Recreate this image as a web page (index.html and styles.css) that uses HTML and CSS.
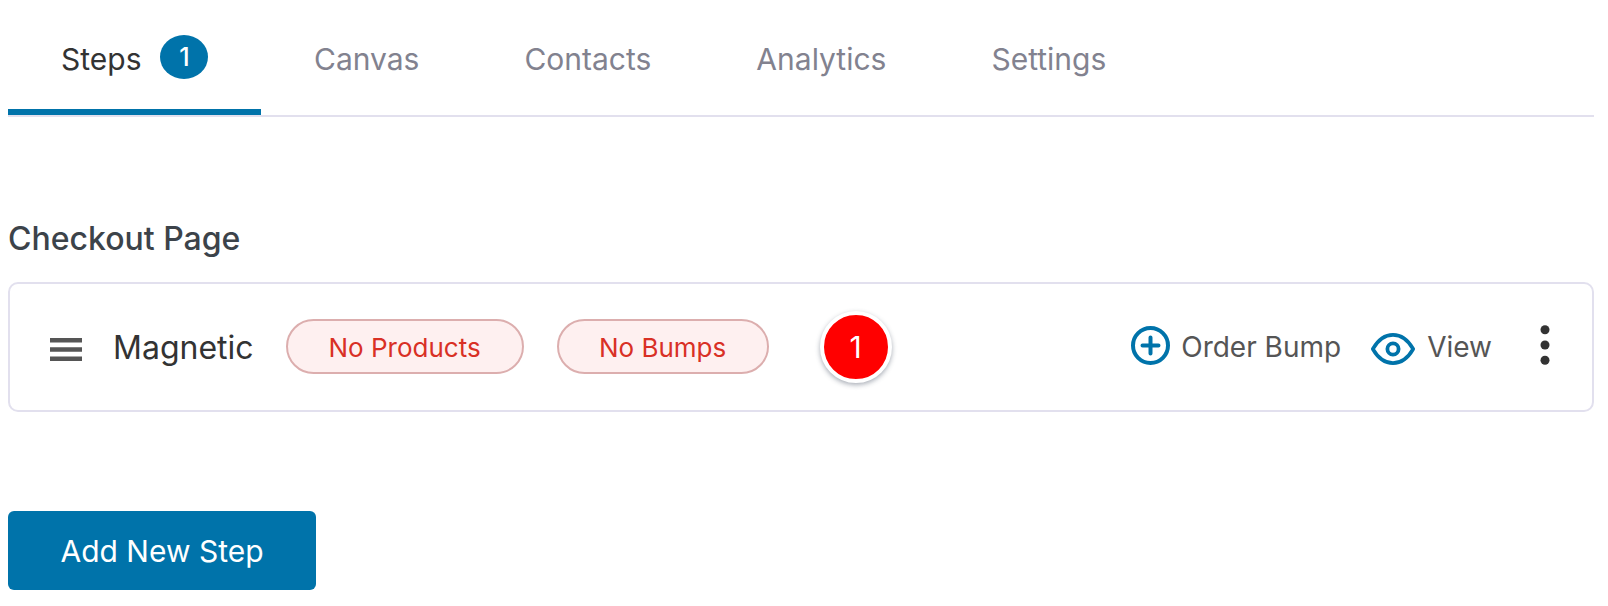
FILE: index.html
```html
<!DOCTYPE html>
<html lang="en">
<head>
  <meta charset="UTF-8">
  <title>Funnel Steps</title>
  <link rel="stylesheet" href="styles.css">
</head>
<body>

  <!-- Tabs -->
  <div class="tabs">
    <a class="tab active">Steps <span class="tab-count">1</span></a>
    <a class="tab">Canvas</a>
    <a class="tab">Contacts</a>
    <a class="tab">Analytics</a>
    <a class="tab">Settings</a>
  </div>

  <h2 class="step-title">Checkout Page</h2>

  <div class="step-card">
    <svg class="drag-icon" width="32" height="23" viewBox="0 0 32 23"><path d="M0 0h32v4.500H0zM0 9.250h32v4.500H0zM0 18.500h32v4.500H0z" fill="#555"/></svg>
    <span class="step-name">Magnetic</span>
    <span class="pill pill-products">No Products</span>
    <span class="pill pill-bumps">No Bumps</span>
    <span class="red-dot">1</span>

    <div class="step-actions">
      <a class="action action-bump">
        <svg width="39" height="39" viewBox="0 0 39 39"><circle cx="19.500" cy="19.500" r="17.500" fill="none" stroke="#0073aa" stroke-width="4"/><path d="M19.500 11.500v16M11.500 19.500h16" fill="none" stroke="#0073aa" stroke-width="4" stroke-linecap="round"/></svg>
        Order Bump
      </a>
      <a class="action action-view">
        <svg width="44" height="32" viewBox="0 0 44 32"><path d="M1.800 16C7 7 14 1.900 22 1.900S37 7 42.200 16C37 25 30 30.100 22 30.100S7 25 1.800 16z" fill="none" stroke="#0073aa" stroke-width="3.600" stroke-linejoin="round"/><circle cx="22" cy="16" r="5.600" fill="none" stroke="#0073aa" stroke-width="3.800"/></svg>
        View
      </a>
      <svg class="more-icon" width="10" height="40" viewBox="0 0 10 40"><circle cx="5" cy="4.800" r="4.500" fill="#333"/><circle cx="5" cy="20" r="4.500" fill="#333"/><circle cx="5" cy="35.200" r="4.500" fill="#333"/></svg>
    </div>
  </div>

  <button class="add-btn">Add New Step</button>

</body>
</html>
```

FILE: styles.css
```css
body {
  font-family: Inter, "Noto Sans", sans-serif;
  background: #fff;
  margin: 0;
  padding: 0 14px 0 8px;
  height: 606px;
  overflow: hidden;
  box-sizing: border-box;
}

.tabs {
  display: flex;
  height: 117px;
  box-sizing: border-box;
  padding-top: 34px;
  border-bottom: 2px solid #e2e0ee;
}

.tab {
  display: flex;
  align-items: flex-start;
  height: 81px;
  box-sizing: border-box;
  padding: 0 52.5px;
  font-size: 30px;
  line-height: 50px;
  color: #82828f;
}

.tab.active {
  padding: 0 53px;
  color: #333;
  border-bottom: 6px solid #0073aa;
}

.tab-count {
  width: 48px;
  height: 44px;
  margin: 1px 0 0 19px;
  border-radius: 50%;
  background: #0073aa;
  color: #fff;
  font-size: 25px;
  font-weight: 500;
  line-height: 44px;
  text-align: center;
}

.step-title {
  margin: 102px 0 0;
  font-size: 32px;
  line-height: 40px;
  font-weight: 500;
  color: #3c434a;
}

.step-card {
  display: flex;
  align-items: center;
  height: 130px;
  box-sizing: border-box;
  margin-top: 23px;
  padding: 0 42px 0 40px;
  border: 2px solid #e2e0ee;
  border-radius: 10px;
}

.drag-icon {
  margin-top: 4px;
}

.step-name {
  margin-left: 31px;
  font-size: 32px;
  color: #333;
}

.pill {
  display: block;
  height: 55px;
  margin-top: -2px;
  box-sizing: border-box;
  border: 2px solid #dcaeae;
  border-radius: 28px;
  background: #fef0f0;
  color: #d93025;
  font-size: 26px;
  line-height: 53px;
  text-align: center;
}

.pill-products {
  width: 238px;
  margin-left: 32px;
}

.pill-bumps {
  width: 212px;
  margin-left: 33px;
}

.red-dot {
  width: 64px;
  height: 64px;
  margin-left: 51px;
  border-radius: 50%;
  background: #f00;
  border: 4px solid #fff;
  box-shadow: 0 2px 5px rgba(60, 70, 90, 0.45);
  color: #fff;
  font-size: 30px;
  line-height: 64px;
  text-align: center;
}

.step-actions {
  display: flex;
  align-items: center;
  margin-left: auto;
}

.action {
  display: flex;
  align-items: center;
  font-size: 28px;
  color: #555;
}

.action-bump svg {
  margin: -3px 11px 0 0;
}

.action-view {
  margin-left: 30px;
}

.action-view svg {
  margin: 3px 12px 0 0;
}

.more-icon {
  margin: -4px 0 0 48px;
}

.add-btn {
  display: block;
  width: 308px;
  height: 79px;
  margin-top: 99px;
  border: none;
  border-radius: 6px;
  background: #0073aa;
  color: #fff;
  font-family: inherit;
  font-size: 30px;
  cursor: pointer;
}
```
